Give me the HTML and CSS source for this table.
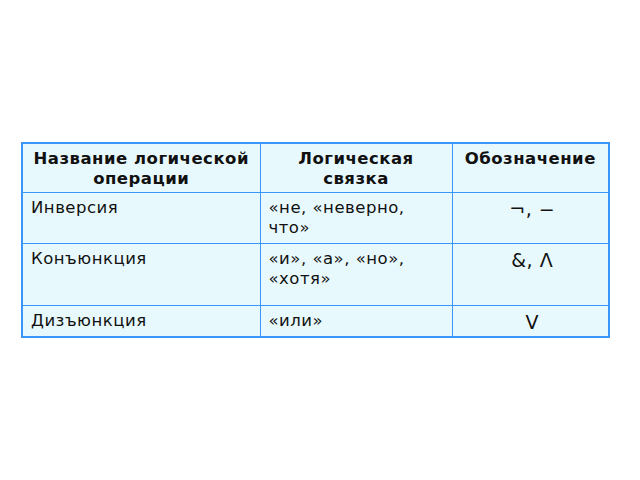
FILE: index.html
```html
<!DOCTYPE html>
<html lang="ru">
<head>
<meta charset="utf-8">
<link rel="stylesheet" href="styles.css">
</head>
<body>
<div class="page">
<table class="logic">
  <colgroup>
    <col class="c1"><col class="c2"><col class="c3">
  </colgroup>
  <tr class="head">
    <th>Название логической операции</th>
    <th>Логическая связка</th>
    <th>Обозначение</th>
  </tr>
  <tr class="r1">
    <td>Инверсия</td>
    <td>«не, «неверно, что»</td>
    <td class="sym">¬, −</td>
  </tr>
  <tr class="r2">
    <td>Конъюнкция</td>
    <td>«и», «а», «но», «хотя»</td>
    <td class="sym">&amp;, Λ</td>
  </tr>
  <tr class="r3">
    <td>Дизъюнкция</td>
    <td>«или»</td>
    <td class="sym">V</td>
  </tr>
</table>
</div>
</body>
</html>
```
FILE: styles.css
```css
html, body {
  margin: 0;
  padding: 0;
  background: #ffffff;
}
.page {
  padding: 142px 0 0 21px;
}
.logic {
  border-collapse: collapse;
  border: 2px solid #3a96f8;
  background: #e8f9fd;
  font-family: "DejaVu Sans", sans-serif;
  font-size: 16.5px;
  letter-spacing: 0.5px;
  line-height: 20px;
  color: #111;
  table-layout: fixed;
  width: 587px;
}
.c1 { width: 238px; }
.c2 { width: 192px; }
.c3 { width: 157px; }
.logic th, .logic td {
  border: 1px solid #3a96f8;
  vertical-align: top;
  padding: 5px 4px 3px 8px;
}
.logic th {
  font-weight: bold;
  text-align: center;
  padding-left: 4px;
}
.logic td.sym {
  text-align: center;
  font-size: 19px;
  letter-spacing: 0.5px;
  padding-top: 6px;
}
.r1 td { height: 41px; }
.r2 td { height: 52px; }
.r3 td { height: 22px; }
.r3 td.sym { height: 21px; }
```
